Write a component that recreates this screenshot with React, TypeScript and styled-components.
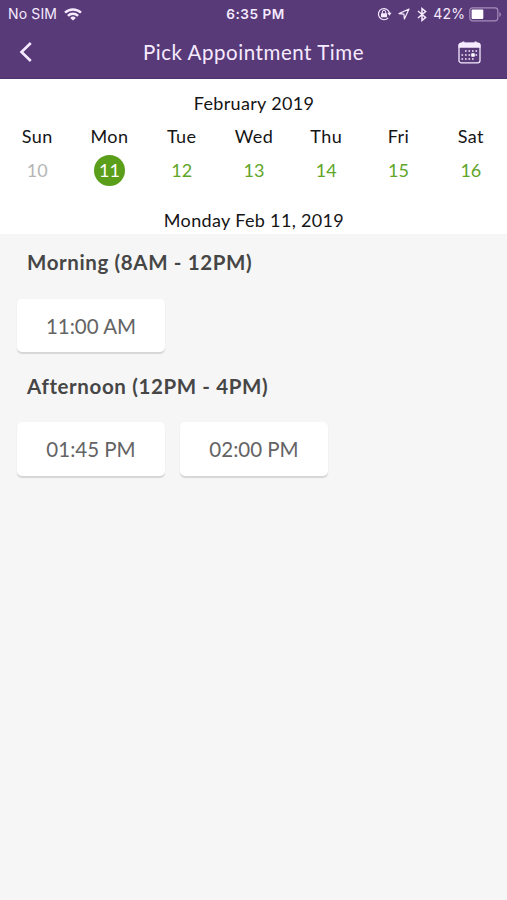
import React from "react";
import styled, { createGlobalStyle } from "styled-components";

const GlobalStyle = createGlobalStyle`
  * { box-sizing: border-box; }
  body { margin: 0; background: #f6f6f6; font-family: Lato, sans-serif; }
`;

const Screen = styled.main`
  display: flex;
  flex-direction: column;
  min-height: 900px;
  background: #f6f6f6;
`;

const Header = styled.header`
  height: 79px;
  background: #583a78;
  border-bottom: 1px solid #4f3270;
  color: #f6eaff;
`;

const StatusBar = styled.div`
  display: grid;
  grid-template-columns: 1fr auto 1fr;
  align-items: center;
  height: 27px;
  padding: 1px 5px 0 8px;
  font-family: Inter, sans-serif;
  font-size: 14px;
  line-height: 26px;
`;

const Carrier = styled.div`
  display: flex;
  align-items: center;
  gap: 7px;
  letter-spacing: 0.15px;
`;

const Clock = styled.div`
  font-size: 13.6px;
  font-weight: 600;
  letter-spacing: 0.5px;
  padding-left: 1px;
`;

const Indicators = styled.div`
  display: flex;
  align-items: center;
  justify-content: flex-end;
  gap: 6.5px;
`;

const Charge = styled.div`
  display: flex;
  align-items: center;
  gap: 4px;
  letter-spacing: 0.1px;
`;

const NavBar = styled.nav`
  display: grid;
  grid-template-columns: 60px 1fr 60px;
  align-items: center;
  height: 50px;
`;

const IconButton = styled.button<{ $inset: number }>`
  display: flex;
  padding: 0 0 0 ${(p) => p.$inset}px;
  border: 0;
  background: none;
  color: inherit;
`;

const Title = styled.h1`
  margin: 0;
  padding-bottom: 1px;
  font-size: 20.5px;
  font-weight: 400;
  line-height: 48px;
  letter-spacing: 0.55px;
  text-align: center;
  white-space: nowrap;
`;

const Calendar = styled.section`
  height: 155px;
  background: #fff;
  color: #151515;
  font-size: 18px;
  text-align: center;
`;

const CalendarLabel = styled.div<{ $top: number }>`
  padding: ${(p) => p.$top}px 0 0 1px;
  line-height: 24px;
  letter-spacing: 0.34px;
`;

const Week = styled.div`
  display: grid;
  grid-template-columns: repeat(7, 1fr);
  padding: 9px 0 0 1px;
`;

const Day = styled.div`
  display: flex;
  flex-direction: column;
  align-items: center;
  line-height: 24px;
  letter-spacing: 0.45px;
`;

const DateBadge = styled.span<{ $state: "past" | "selected" | "open" }>`
  display: flex;
  align-items: center;
  justify-content: center;
  width: 31px;
  height: 31px;
  margin-top: 7px;
  padding-bottom: 1px;
  border-radius: 50%;
  letter-spacing: 0;
  background: ${(p) => (p.$state === "selected" ? "#5a9e19" : "transparent")};
  color: ${(p) => ({ past: "#b5b5b5", selected: "#fff", open: "#61a529" })[p.$state]};
`;

const Period = styled.section`
  padding: 0 17px;
`;

const PeriodTitle = styled.h2`
  margin: 0;
  padding: 14px 0 22px 10px;
  font-size: 20.5px;
  font-weight: 700;
  line-height: 28px;
  letter-spacing: 0.62px;
  color: #464646;
`;

const Slots = styled.div`
  display: flex;
  gap: 15px;
  height: 59.5px;
  padding-top: 0.5px;
`;

const Slot = styled.button`
  width: 148px;
  height: 53.5px;
  padding: 0;
  border: 0;
  border-radius: 5px;
  background: #fff;
  box-shadow: 0 1.5px 1px #d6d6d6;
  color: #646464;
  font: 400 20.5px/54px Lato, sans-serif;
`;

const days = [
  ["Sun", 10], ["Mon", 11], ["Tue", 12], ["Wed", 13], ["Thu", 14], ["Fri", 15], ["Sat", 16],
] as const;

const periods = [
  { title: "Morning (8AM - 12PM)", slots: ["11:00 AM"] },
  { title: "Afternoon (12PM - 4PM)", slots: ["01:45 PM", "02:00 PM"] },
];

const WifiIcon = () => (
  <svg width="18" height="13" viewBox="0 0 18 13" fill="none" stroke="currentColor" strokeWidth="2.4">
    <path d="M1 4.7a11.5 11.5 0 0 1 16 0M3.9 7.8a7.4 7.4 0 0 1 10.2 0" />
    <path d="M9 12.6 6.2 9.9a4 4 0 0 1 5.6 0Z" fill="currentColor" stroke="none" />
  </svg>
);

const RotationLockIcon = () => (
  <svg width="15" height="14" viewBox="0 0 15 14" fill="none" stroke="currentColor">
    <path d="M11.2 10.9A5.6 5.6 0 1 1 12.5 6" strokeWidth="1.2" />
    <path d="M10.2 5.8h4.4l-2.2 2.9Z" fill="currentColor" stroke="none" />
    <rect x="4" y="6.2" width="6" height="4" rx=".5" fill="currentColor" stroke="none" />
    <path d="M5.3 6.5V5a1.7 1.7 0 0 1 3.4 0v1.5" strokeWidth="1" />
  </svg>
);

const LocationIcon = () => (
  <svg width="12" height="12" viewBox="0 0 12 12" fill="none" stroke="currentColor" strokeWidth="1.2" strokeLinejoin="round">
    <path d="M11 1 1 5.6l4.9.5.5 4.9Z" />
  </svg>
);

const BluetoothIcon = () => (
  <svg width="10" height="15" viewBox="0 0 10 15" fill="none" stroke="currentColor" strokeWidth="1.5">
    <path d="m1 4 7.6 6.5L5 13.4V1.6l3.6 2.9L1 11" />
  </svg>
);

const BatteryIcon = () => (
  <svg width="33" height="15" viewBox="0 0 33 15" fill="none">
    <rect x=".8" y=".8" width="28" height="13" rx="2.8" stroke="#a58dbb" strokeWidth="1.2" />
    <rect x="2.6" y="2.6" width="11.7" height="9.5" rx="1" fill="#fff" />
    <path d="M30.4 5v5c2-.7 2-4.3 0-5Z" fill="#a58dbb" />
  </svg>
);

const BackIcon = () => (
  <svg width="13" height="22" viewBox="0 0 13 22" fill="none" stroke="currentColor" strokeWidth="2.6">
    <path d="M11.8 2 2.5 11l9.3 9" />
  </svg>
);

const CalendarIcon = () => (
  <svg width="23" height="23" viewBox="0 0 23 23" fill="none">
    <rect x="1" y="2.2" width="21" height="19.6" rx="2.4" stroke="currentColor" strokeWidth="1.3" />
    <path d="M.5 6.8V4.2c0-1.5 1-2.4 2.4-2.4h1.5V.5h2v1.3h10.2V.5h2v1.3h1.5c1.4 0 2.4.9 2.4 2.4v2.6Z" fill="currentColor" />
    <path d="M7 10h13M3.5 14h16M3.5 18h13" stroke="currentColor" strokeWidth="1.6" strokeDasharray="1.6 1.9" />
    <rect x="13.2" y="12.2" width="3.6" height="3.6" rx=".8" fill="#fff" />
  </svg>
);

export default function App() {
  return (
    <Screen>
      <GlobalStyle />
      <Header>
        <StatusBar>
          <Carrier>No SIM <WifiIcon /></Carrier>
          <Clock>6:35 PM</Clock>
          <Indicators>
            <RotationLockIcon />
            <LocationIcon />
            <BluetoothIcon />
            <Charge>42% <BatteryIcon /></Charge>
          </Indicators>
        </StatusBar>
        <NavBar>
          <IconButton $inset={19} aria-label="Back"><BackIcon /></IconButton>
          <Title>Pick Appointment Time</Title>
          <IconButton $inset={11} aria-label="Calendar"><CalendarIcon /></IconButton>
        </NavBar>
      </Header>
      <Calendar>
        <CalendarLabel $top={12}>February 2019</CalendarLabel>
        <Week>
          {days.map(([name, date]) => (
            <Day key={name}>
              {name}
              <DateBadge $state={date < 11 ? "past" : date === 11 ? "selected" : "open"}>{date}</DateBadge>
            </Day>
          ))}
        </Week>
        <CalendarLabel $top={22}>Monday Feb 11, 2019</CalendarLabel>
      </Calendar>
      {periods.map((period) => (
        <Period key={period.title}>
          <PeriodTitle>{period.title}</PeriodTitle>
          <Slots>
            {period.slots.map((time) => <Slot key={time}>{time}</Slot>)}
          </Slots>
        </Period>
      ))}
    </Screen>
  );
}
